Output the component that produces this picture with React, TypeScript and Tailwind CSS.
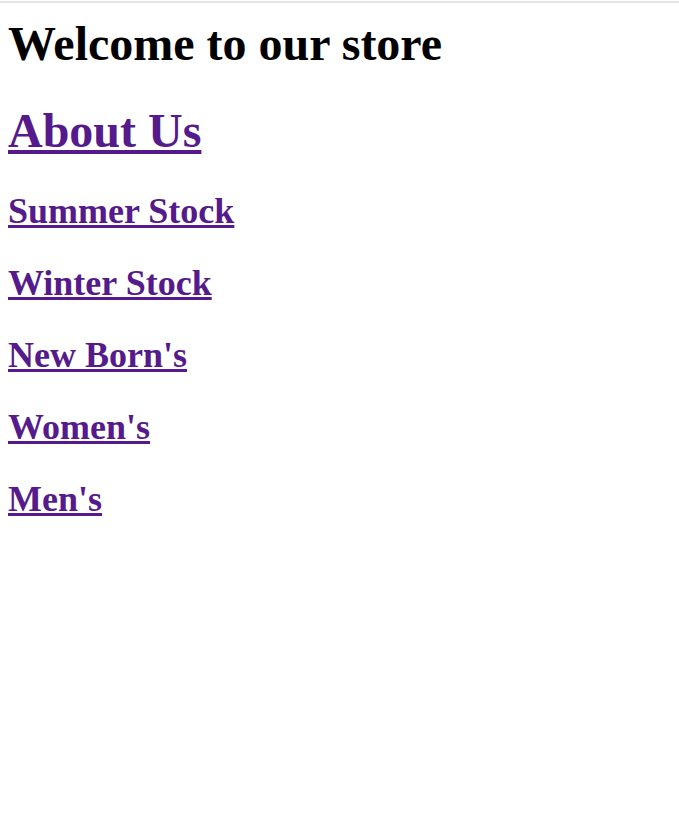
const links = ["Summer Stock", "Winter Stock", "New Born's", "Women's", "Men's"];

export default function App() {
  return (
    <div className="min-h-[817px] bg-white font-['Liberation_Serif','Times_New_Roman',serif] text-black">
      <div className="pt-px">
        <div className="h-[2px] bg-[#e3e3e3]" />
      </div>
      <div className="px-2">
        <h1 className="mt-[13px] text-[48px] leading-[55px] font-bold">Welcome to our store</h1>
        <h1 className="mt-[32px] text-[48px] leading-[55px] font-bold">
          <a href="#" className="text-[#551a8b] underline">
            About Us
          </a>
        </h1>
        {links.map((l, i) => (
          <h2
            key={l}
            className={`${i === 0 ? "mt-[33px]" : "mt-[31px]"} text-[36px] leading-[41px] font-bold`}
          >
            <a href="#" className="text-[#551a8b] underline">
              {l}
            </a>
          </h2>
        ))}
      </div>
    </div>
  );
}
